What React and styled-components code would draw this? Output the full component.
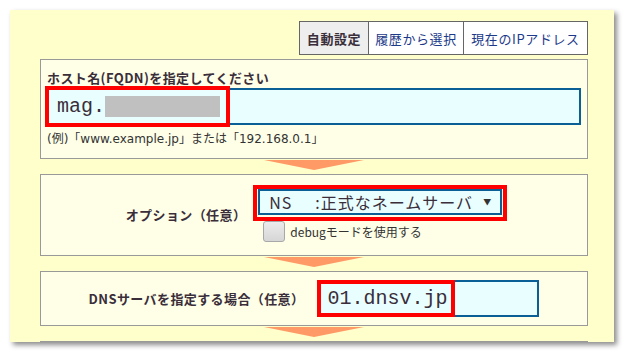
import React from 'react';
import styled, { createGlobalStyle } from 'styled-components';

const GlobalStyle = createGlobalStyle`
  html, body {
    margin: 0;
    background: #ffffff;
  }
  body {
    font-family: "Noto Sans CJK JP", "Liberation Sans", sans-serif;
    color: #3a2e3a;
  }
`;

const Panel = styled.div`
  box-sizing: border-box;
  margin: 10px;
  width: 604px;
  height: 332px;
  background: #ffffcc;
  box-shadow: 3px 3px 5px rgba(0, 0, 0, 0.45);
  padding: 11px 26px 0 30px;
  overflow: hidden;
`;

const Tabs = styled.div`
  display: flex;
  justify-content: flex-end;
  height: 34px;
`;

const Tab = styled.div`
  box-sizing: border-box;
  width: ${(p) => p.$w}px;
  height: 34px;
  margin-left: -1px;
  border: 1px solid #666;
  background: ${(p) => (p.$active ? '#eeeeee' : '#ffffff')};
  color: ${(p) => (p.$active ? '#3a2e3a' : '#1d3a8a')};
  font-weight: ${(p) => (p.$active ? 700 : 400)};
  font-size: 13px;
  display: flex;
  align-items: center;
  justify-content: center;
  letter-spacing: 0.6px;
`;

const Box = styled.div`
  box-sizing: border-box;
  height: ${(p) => p.$h}px;
  margin-top: ${(p) => p.$mt || 0}px;
  border: 1px solid #999;
  background: #ffffe8;
`;

const HostBox = styled(Box)`
  padding: 9px 7px 0 6px;
`;

const Label = styled.div`
  font-size: 13px;
  line-height: 18px;
  font-weight: 700;
  letter-spacing: 0.4px;
  white-space: nowrap;
`;

const TextField = styled.div`
  position: relative;
  box-sizing: border-box;
  width: ${(p) => p.$w}px;
  height: 37px;
  margin-top: ${(p) => p.$mt || 0}px;
  border: 2px solid #0a5f96;
  background: #e9feff;
  display: flex;
  align-items: center;
  padding-left: 8px;
  font-family: "Liberation Mono", monospace;
  font-size: 20px;
  color: #3a2e3a;
`;

const Blurred = styled.span`
  display: inline-block;
  width: 115px;
  height: 21px;
  background: #c0c0c0;
`;

const Highlight = styled.div`
  position: absolute;
  box-sizing: border-box;
  border: 4px solid #ff0000;
  left: ${(p) => p.$l}px;
  top: ${(p) => p.$t}px;
  width: ${(p) => p.$w}px;
  height: ${(p) => p.$h}px;
  pointer-events: none;
`;

const Hint = styled.div`
  margin-top: 6px;
  font-family: "DejaVu Sans", "Noto Sans CJK JP", sans-serif;
  font-size: 12px;
  line-height: 16px;
  color: #333;
`;

const Spacer = styled.div`
  height: 15px;
  display: flex;
  justify-content: center;
  padding-top: 1px;
  box-sizing: border-box;
`;

const Arrow = styled.div`
  width: 0;
  height: 0;
  border-left: 50px solid transparent;
  border-right: 50px solid transparent;
  border-top: 10px solid #ff9966;
`;

const Row = styled(Box)`
  display: flex;
  justify-content: center;
  align-items: center;
  gap: ${(p) => p.$gap}px;
`;

const Controls = styled.div`
  display: flex;
  flex-direction: column;
  gap: 6px;
`;

const Select = styled.div`
  position: relative;
  box-sizing: border-box;
  width: 244px;
  height: 26px;
  border: 2px solid #0a5f96;
  background: #e9feff;
  display: flex;
  align-items: center;
  padding: 0 8px 0 9px;
  font-size: 16px;
  letter-spacing: 1px;
  color: #3a2e3a;
  white-space: nowrap;
`;

const Code = styled.span`
  width: 46px;
`;

const Caret = styled.span`
  margin-left: auto;
  font-size: 8px;
  color: #333;
`;

const CheckRow = styled.label`
  display: flex;
  align-items: center;
  gap: 5px;
  margin-left: 5px;
  font-size: 12px;
  color: #333;
`;

const Check = styled.span`
  box-sizing: border-box;
  width: 22px;
  height: 21px;
  border: 1px solid #a8a8a8;
  border-radius: 3px;
  background: linear-gradient(#ececec, #d6d6d6);
`;

export default function App() {
  return (
    <>
      <GlobalStyle />
      <Panel>
        <Tabs>
          <Tab $w={70} $active>自動設定</Tab>
          <Tab $w={96}>履歴から選択</Tab>
          <Tab $w={125}>現在のIPアドレス</Tab>
        </Tabs>

        <HostBox $h={100} $mt={4}>
          <Label>ホスト名(FQDN)を指定してください</Label>
          <TextField $w={534} $mt={1}>
            mag.<Blurred />
            <Highlight $l={-4} $t={-4} $w={185} $h={41} />
          </TextField>
          <Hint>(例)「www.example.jp」または「192.168.0.1」</Hint>
        </HostBox>

        <Spacer><Arrow /></Spacer>

        <Row $h={82} $gap={12}>
          <Label>オプション（任意）</Label>
          <Controls>
            <Select>
              <Code>NS</Code>:正式なネームサーバ
              <Caret>▼</Caret>
              <Highlight $l={-7} $t={-6} $w={254} $h={36} />
            </Select>
            <CheckRow>
              <Check />
              debugモードを使用する
            </CheckRow>
          </Controls>
        </Row>

        <Spacer><Arrow /></Spacer>

        <Row $h={55} $gap={13}>
          <Label>DNSサーバを指定する場合（任意）</Label>
          <TextField $w={222}>
            01.dnsv.jp
            <Highlight $l={-2} $t={-2} $w={138} $h={37} />
          </TextField>
        </Row>

        <Spacer><Arrow /></Spacer>

        <Box $h={60} />
      </Panel>
    </>
  );
}
